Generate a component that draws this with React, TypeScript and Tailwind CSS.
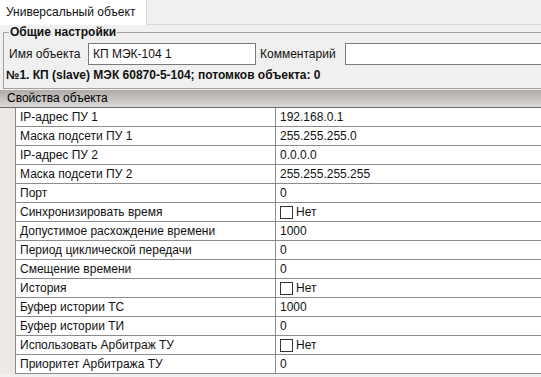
const ROWS: { name: string; value?: string; check?: boolean }[] = [
  { name: 'IP-адрес ПУ 1', value: '192.168.0.1' },
  { name: 'Маска подсети ПУ 1', value: '255.255.255.0' },
  { name: 'IP-адрес ПУ 2', value: '0.0.0.0' },
  { name: 'Маска подсети ПУ 2', value: '255.255.255.255' },
  { name: 'Порт', value: '0' },
  { name: 'Синхронизировать время', check: true },
  { name: 'Допустимое расхождение времени', value: '1000' },
  { name: 'Период циклической передачи', value: '0' },
  { name: 'Смещение времени', value: '0' },
  { name: 'История', check: true },
  { name: 'Буфер истории ТС', value: '1000' },
  { name: 'Буфер истории ТИ', value: '0' },
  { name: 'Использовать Арбитраж ТУ', check: true },
  { name: 'Приоритет Арбитража ТУ', value: '0' },
];

export default function App() {
  return (
    <div
      className="w-[541px] h-[377px] overflow-hidden bg-[#f0f0f0] text-[12px] leading-[14px] text-[#111]"
      style={{ fontFamily: '"Liberation Sans", Arial, sans-serif' }}
    >
      {/* Tabs */}
      <div className="flex h-[25px] border-b border-[#d9d9d9]">
        <div className="w-[147px] h-[25px] bg-white border-r border-[#d9d9d9] pl-[6px] pt-[5px]">
          Универсальный объект
        </div>
      </div>

      {/* Общие настройки */}
      <fieldset className="ml-[3px] w-[560px] h-[64px] border border-[#a0a0a0] px-[4px]">
        <legend className="font-bold px-[1px] ml-[1px] leading-[14px]">Общие настройки</legend>
        <div className="flex items-center h-[22px] mt-[4px]">
          <span className="w-[80px] pl-[1px]">Имя объекта</span>
          <div className="w-[168px] h-[22px] bg-white border border-[#7a7a7a] pl-[4px] flex items-center">
            КП МЭК-104 1
          </div>
          <span className="ml-[4px] w-[85px]">Комментарий</span>
          <div className="flex-1 h-[22px] bg-white border border-[#7a7a7a]" />
        </div>
        <div className="font-bold mt-[3px] -ml-[2px]">
          №1. КП (slave) МЭК 60870-5-104; потомков объекта: 0
        </div>
      </fieldset>

      {/* Свойства объекта */}
      <div className="mt-[1px] h-[18px] bg-gradient-to-b from-[#afaba8] to-[#dbd8d5] border-b border-[#6e6e6e] pl-[7px] pt-[1px] text-black">
        Свойства объекта
      </div>
      <div className="flex bg-[#ece9e7]">
        <div className="w-[15px] shrink-0" />
        <div className="flex-1 bg-white border-l border-[#8c8c8c]">
          {ROWS.map((r) => (
            <div key={r.name} className="flex h-[19px] border-b border-[#8c8c8c]">
              <div className="w-[260px] shrink-0 border-r border-[#8c8c8c] pl-[4px] flex items-center">
                {r.name}
              </div>
              <div className="flex-1 pl-[4px] flex items-center">
                {r.check ? (
                  <>
                    <span className="inline-block w-[13px] h-[13px] border border-[#333] bg-white mr-[3px]" />
                    Нет
                  </>
                ) : (
                  r.value
                )}
              </div>
            </div>
          ))}
        </div>
      </div>
    </div>
  );
}
